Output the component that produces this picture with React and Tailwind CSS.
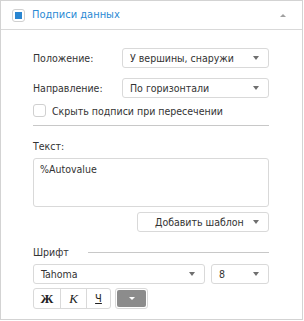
import React from 'react';

const Arrow = ({ className = '' }) => (
  <span className={`block w-0 h-0 border-l-[3.5px] border-r-[3.5px] border-t-[4px] border-l-transparent border-r-transparent border-t-[#6f6f6f] ${className}`} />
);

const Select = ({ value, className = '' }) => (
  <div className={`h-[20px] flex items-center justify-between pl-[7px] pr-[9px] border border-[#d9d9d9] rounded-[3px] bg-white text-[#333] ${className}`}>
    <span className="whitespace-nowrap">{value}</span>
    <Arrow />
  </div>
);

export default function App() {
  return (
    <div className="w-[303px] h-[320px] border border-[#d3d3d3] bg-white text-[10.5px] leading-[14px] text-[#333] whitespace-nowrap" style={{ fontFamily: '"DejaVu Sans Condensed", "Liberation Sans", Arial, sans-serif' }}>
      {/* Header */}
      <div className="h-[29px] flex items-center border-b border-[#d9d9d9] pl-[11px] pr-[16px]">
        <div className="w-[13px] h-[13px] rounded-[3px] border border-[#d0d0d0] flex items-center justify-center">
          <div className="w-[7px] h-[7px] bg-[#2a86d1]" />
        </div>
        <span className="ml-[7px] text-[11px] text-[#2a8ad4]">Подписи данных</span>
        <span className="ml-auto block w-0 h-0 border-l-[3px] border-r-[3px] border-b-[3px] border-l-transparent border-r-transparent border-b-[#a0a0a0]" />
      </div>

      {/* Body */}
      <div className="pl-[32px] w-[268px]">
        <div className="mt-[18px] flex items-center">
          <span className="w-[89px]">Положение:</span>
          <Select value="У вершины, снаружи" className="w-[147px]" />
        </div>
        <div className="mt-[10px] flex items-center">
          <span className="w-[89px]">Направление:</span>
          <Select value="По горизонтали" className="w-[147px]" />
        </div>
        <div className="mt-[6px] flex items-center h-[13px]">
          <div className="w-[13px] h-[13px] rounded-[3px] border border-[#d0d0d0]" />
          <span className="ml-[6px]">Скрыть подписи при пересечении</span>
        </div>
        <div className="mt-[8px] h-px bg-[#c8c8c8]" />

        <div className="mt-[13px]">Текст:</div>
        <div className="mt-[5px] h-[49px] border border-[#d9d9d9] rounded-[3px] px-[6px] pt-[3px]">%Autovalue</div>
        <div className="mt-[5px] flex justify-end">
          <div className="w-[132px] h-[20px] flex items-center border border-[#d9d9d9] rounded-[3px] pl-[17px] pr-[9px]">
            <span>Добавить шаблон</span>
            <Arrow className="ml-auto" />
          </div>
        </div>

        <div className="mt-[13px] flex items-center">
          <span>Шрифт</span>
          <div className="ml-[19px] flex-1 h-px bg-[#c8c8c8]" />
        </div>
        <div className="mt-[5px] flex gap-[6px]">
          <Select value="Tahoma" className="w-[172px] pl-[4px]" />
          <Select value="8" className="w-[58px] pl-[4px]" />
        </div>
        <div className="mt-[4px] flex items-center gap-[4px]">
          <div className="flex h-[21px] border border-[#d9d9d9] rounded-[3px]">
            <div className="w-[26px] flex items-center justify-center font-bold text-[13px] text-[#222]" style={{ fontFamily: '"Liberation Serif", serif' }}>Ж</div>
            <div className="w-[26px] flex items-center justify-center border-l border-[#d9d9d9] italic text-[13px] text-[#222]" style={{ fontFamily: '"Liberation Serif", serif' }}>К</div>
            <div className="w-[24px] flex items-center justify-center border-l border-[#d9d9d9] underline text-[11px] text-[#222]">Ч</div>
          </div>
          <div className="w-[33px] h-[21px] border border-[#d9d9d9] rounded-[3px] p-[1px]">
            <div className="w-full h-full bg-[#8c8c8c] rounded-[2px] flex items-center justify-center">
              <span className="block w-0 h-0 border-l-[3px] border-r-[3px] border-t-[3px] border-l-transparent border-r-transparent border-t-white" />
            </div>
          </div>
        </div>
      </div>
    </div>
  );
}
